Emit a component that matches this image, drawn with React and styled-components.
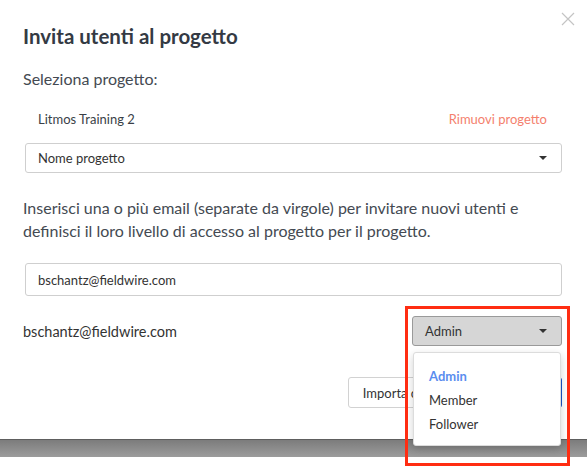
import React, { useState } from "react";
import styled, { createGlobalStyle } from "styled-components";

const GlobalStyle = createGlobalStyle`
  html, body {
    margin: 0;
    padding: 0;
    background: #ffffff;
    font-family: "Lato", "Open Sans", sans-serif;
    color: #3a3f47;
  }
  * { box-sizing: border-box; }
`;

// pagina
const Page = styled.div`
  width: 587px;
  height: 468px;
  overflow: hidden;
  display: flex;
  flex-direction: column;
  background: #ffffff;
`;

// finestra modale
const Modal = styled.div`
  position: relative;
  height: 439px;
  padding: 23px 25px 0 23px;
  display: flex;
  flex-direction: column;
  background: #ffffff;
`;

// fascia grigia sotto la modale
const Shade = styled.div`
  height: 18px;
  border-top: 1px solid #5e5e5e;
  background: linear-gradient(#7c7c7c, #9c9c9c);
`;

const Close = styled.button`
  position: absolute;
  top: 12px;
  right: 12px;
  width: 14px;
  height: 14px;
  padding: 0;
  border: none;
  background: none;
  cursor: pointer;
`;

const Title = styled.h1`
  margin: 0;
  font-size: 20.5px;
  font-weight: 700;
  line-height: 26px;
  color: #343a44;
`;

const Label = styled.p`
  margin: 19px 0 0;
  font-size: 16px;
  line-height: 22px;
  color: #444a52;
`;

const ProjectRow = styled.div`
  margin-top: 19px;
  padding: 0 15px 0 15px;
  display: flex;
  justify-content: space-between;
  align-items: center;
  font-size: 13px;
  line-height: 20px;
`;

const RemoveLink = styled.a`
  color: #f47f6e;
  cursor: pointer;
`;

// select stile bootstrap
const Select = styled.div`
  margin-top: ${(p) => p.$mt || "0"};
  margin-left: ${(p) => p.$ml || "2px"};
  height: 30px;
  width: ${(p) => p.$width || "auto"};
  padding: 0 12px;
  display: flex;
  align-items: center;
  justify-content: space-between;
  border: 1px solid ${(p) => (p.$active ? "#9a9a9a" : "#cfcfcf")};
  border-radius: 3px;
  background: ${(p) => (p.$active ? "#d6d6d6" : "#ffffff")};
  font-size: 13px;
  color: #333;
  cursor: pointer;
`;

const Caret = styled.span`
  margin-right: 2px;
  width: 0;
  height: 0;
  border-left: 4px solid transparent;
  border-right: 4px solid transparent;
  border-top: 4px solid #333;
`;

const Paragraph = styled.p`
  margin: 23px 0 0;
  font-size: 16px;
  line-height: 23px;
  color: #444a52;
`;

const Input = styled.input`
  margin: 21px 0 0 2px;
  height: 33px;
  padding: 0 12px;
  border: 1px solid #cfcfcf;
  border-radius: 3px;
  font-family: inherit;
  font-size: 13px;
  color: #333;
  outline: none;
`;

const UserRow = styled.div`
  margin-top: 20px;
  display: flex;
  align-items: center;
  justify-content: space-between;
  font-size: 14.5px;
  color: #333;
`;

const RoleBox = styled.div`
  position: relative;
`;

const Menu = styled.ul`
  position: absolute;
  top: 36px;
  left: 1px;
  z-index: 5;
  width: 148px;
  margin: 0;
  padding: 11px 0 9px;
  list-style: none;
  background: #ffffff;
  border: 1px solid #dcdcdc;
  border-radius: 3px;
  box-shadow: 0 3px 8px rgba(0, 0, 0, 0.18);
`;

const MenuItem = styled.li`
  padding: 0 15px;
  font-size: 13px;
  line-height: 24px;
  font-weight: ${(p) => (p.$selected ? 700 : 400)};
  color: ${(p) => (p.$selected ? "#5b8def" : "#333")};
  cursor: pointer;
`;

const Footer = styled.div`
  margin-top: 31px;
  display: flex;
  justify-content: flex-end;
  gap: 4px;
`;

const Button = styled.button`
  height: 31px;
  padding: 0 14px;
  border: 1px solid ${(p) => (p.$primary ? "#1c55c8" : "#d2d2d2")};
  border-radius: 3px;
  background: ${(p) => (p.$primary ? "#2463d8" : "#ffffff")};
  color: ${(p) => (p.$primary ? "#ffffff" : "#333")};
  font-family: inherit;
  font-size: 13px;
  cursor: pointer;
`;

// riquadro rosso di evidenziazione
const Highlight = styled.div`
  position: absolute;
  left: 405px;
  top: 306px;
  width: 165px;
  height: 160px;
  border: 3px solid #ff2d12;
  z-index: 10;
  pointer-events: none;
`;

const App = () => {
  const [role, setRole] = useState("Admin");

  return (
    <Page>
      <GlobalStyle />
      <Modal>
        <Close aria-label="chiudi">
          <svg width="14" height="14" viewBox="0 0 14 14">
            <path d="M1 1L13 13M13 1L1 13" stroke="#c4c4c4" strokeWidth="1.2" />
          </svg>
        </Close>
        <Title>Invita utenti al progetto</Title>
        <Label>Seleziona progetto:</Label>
        <ProjectRow>
          <span>Litmos Training 2</span>
          <RemoveLink>Rimuovi progetto</RemoveLink>
        </ProjectRow>
        <Select $mt="14px">
          Nome progetto
          <Caret />
        </Select>
        <Paragraph>
          Inserisci una o più email (separate da virgole) per invitare nuovi
          utenti e definisci il loro livello di accesso al progetto per il
          progetto.
        </Paragraph>
        <Input defaultValue="bschantz@fieldwire.com" />
        <UserRow>
          <span>bschantz@fieldwire.com</span>
          <RoleBox>
            <Select $active $width="150px" $ml="0">
              {role}
              <Caret />
            </Select>
            <Menu>
              {["Admin", "Member", "Follower"].map((r) => (
                <MenuItem key={r} $selected={r === role} onClick={() => setRole(r)}>
                  {r}
                </MenuItem>
              ))}
            </Menu>
          </RoleBox>
        </UserRow>
        <Footer>
          <Button>Importa contatti</Button>
          <Button $primary>Invia inviti</Button>
        </Footer>
      </Modal>
      <Shade />
      <Highlight />
    </Page>
  );
};

export default App;
